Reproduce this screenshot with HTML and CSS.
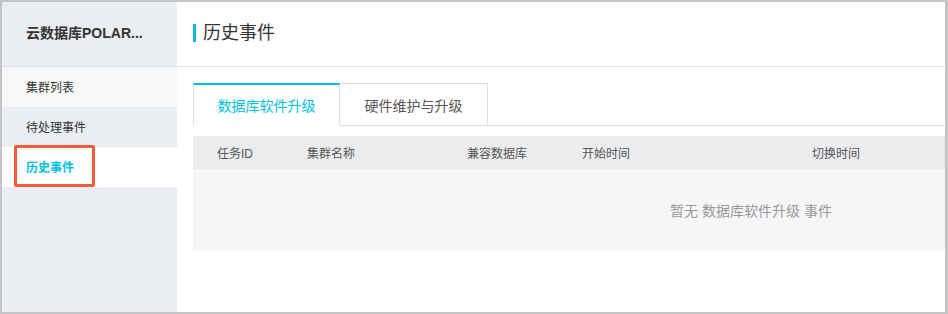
FILE: index.html
```html
<!DOCTYPE html>
<html lang="zh-CN">
<head>
<meta charset="utf-8">
<title>历史事件</title>
<link rel="stylesheet" href="styles.css">
</head>
<body>
<div class="frame">
  <aside class="sidebar">
    <div class="side-head">云数据库POLAR...</div>
    <nav class="menu">
      <div class="menu-item light">集群列表</div>
      <div class="menu-item">待处理事件</div>
      <div class="menu-item active">历史事件<span class="mark"></span></div>
    </nav>
  </aside>
  <main class="main">
    <div class="main-head"><h1 class="title">历史事件</h1></div>
    <div class="content">
      <div class="tabs">
        <div class="tab tab-active">数据库软件升级</div>
        <div class="tab">硬件维护与升级</div>
        <div class="tab-fill"></div>
      </div>
      <div class="table">
        <div class="thead">
          <div class="th c1">任务ID</div>
          <div class="th c2">集群名称</div>
          <div class="th c3">兼容数据库</div>
          <div class="th c4">开始时间</div>
          <div class="th c5">切换时间</div>
        </div>
        <div class="empty">暂无 数据库软件升级 事件</div>
      </div>
    </div>
  </main>
</div>
</body>
</html>
```
FILE: styles.css
```css
* { box-sizing: border-box; }
html, body { margin: 0; padding: 0; background: #fff; }
body {
  font-family: "Liberation Sans", "Noto Sans CJK SC", sans-serif;
  color: #333;
}
.frame {
  width: 948px;
  height: 314px;
  display: flex;
  border-style: solid;
  border-color: #c4c4c4;
  border-width: 2px 3px 2px 2px;
  overflow: hidden;
}
.sidebar {
  width: 175px;
  flex: none;
  background: #eaedf1;
}
.side-head {
  height: 65px;
  border-bottom: 1px solid #dcdfe3;
  display: flex;
  align-items: center;
  padding-left: 24px;
  padding-bottom: 4px;
  font-size: 14px;
  font-weight: bold;
  color: #333;
}
.menu-item {
  position: relative;
  height: 40px;
  display: flex;
  align-items: center;
  padding-left: 24px;
  padding-bottom: 2px;
  font-size: 12px;
  color: #333;
}
.menu-item.light { background: #f7f8fa; }
.menu-item.active {
  background: #fff;
  color: #00c1de;
  font-weight: bold;
}
.mark {
  position: absolute;
  left: 12px;
  top: -2px;
  width: 81px;
  height: 42px;
  border: 3px solid #f45b3b;
  border-radius: 2px;
}
.main {
  flex: 1;
  min-width: 0;
  overflow: hidden;
  background: #fff;
}
.main-head {
  height: 65px;
  border-bottom: 1px solid #e2e2e2;
  display: flex;
  align-items: center;
  padding-left: 16px;
  padding-bottom: 3px;
}
.title {
  margin: 0;
  font-size: 18px;
  font-weight: normal;
  line-height: 18px;
  color: #333;
  border-left: 3px solid #17b2e6;
  padding-left: 7px;
}
.content {
  padding: 16px 0 0 16px;
}
.tabs {
  display: flex;
  height: 43px;
}
.tab {
  width: 148px;
  height: 43px;
  display: flex;
  align-items: center;
  justify-content: center;
  font-size: 14px;
  color: #555;
  border-top: 1px solid #ddd;
  border-right: 1px solid #ddd;
  border-bottom: 1px solid #ddd;
}
.tab-active {
  width: 147px;
  color: #00c1de;
  border-top: 2px solid #00c1de;
  border-left: 1px solid #ddd;
  border-bottom: 1px solid #fff;
}
.tab-fill {
  flex: 1;
  border-bottom: 1px solid #ddd;
}
.table {
  margin-top: 10px;
  width: 1116px;
}
.thead {
  height: 33px;
  background: #ebeced;
  display: flex;
  align-items: center;
}
.th {
  padding-left: 24px;
  font-size: 12px;
  color: #555;
  flex: none;
}
.c1 { width: 90px; }
.c2 { width: 160px; }
.c3 { width: 115px; }
.c4 { width: 230px; }
.c5 { width: 200px; }
.empty {
  height: 82px;
  background: #f5f6f8;
  display: flex;
  align-items: center;
  justify-content: center;
  font-size: 14px;
  color: #999;
}
```
